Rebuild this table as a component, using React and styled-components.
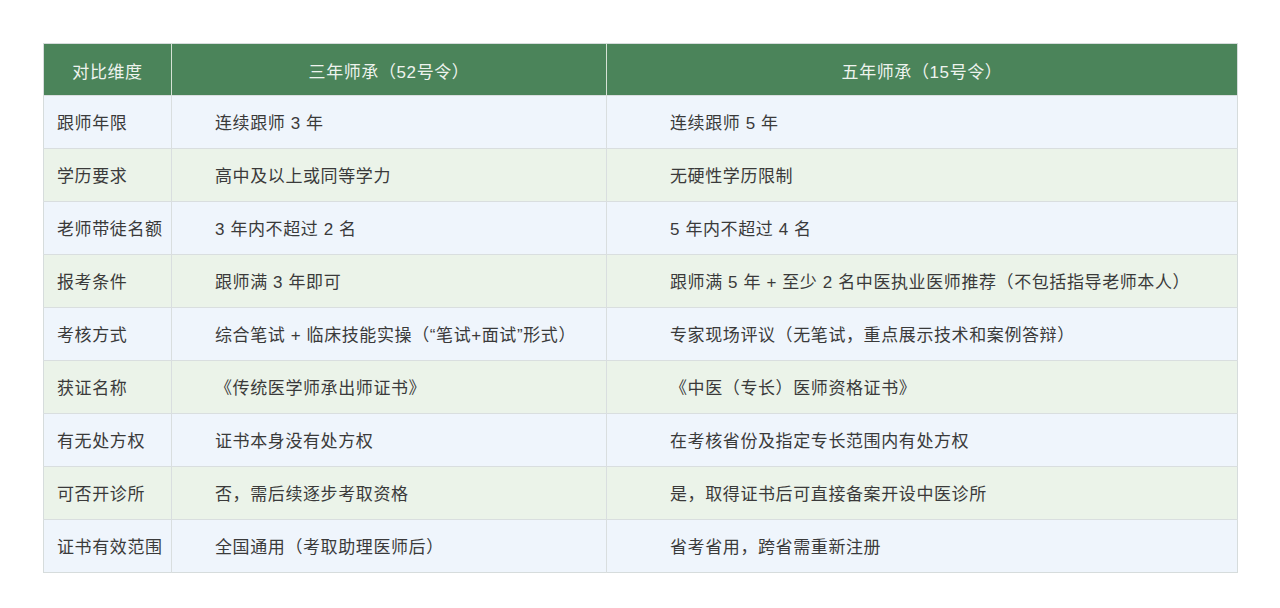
import React from "react";
import styled, { createGlobalStyle } from "styled-components";

const Global = createGlobalStyle`
  html, body {
    margin: 0;
    padding: 0;
    background: #ffffff;
  }
  body {
    font-family: "Liberation Sans", "Noto Sans CJK SC", sans-serif;
    color: #333;
  }
`;

const Page = styled.div`
  width: 1280px;
  height: 608px;
  padding: 43px 0 0 43px;
  box-sizing: border-box;
`;

const Table = styled.table`
  width: 1194px;
  border-collapse: collapse;
  table-layout: fixed;
  border: 1px solid #d6dcdc;
`;

const HeadCell = styled.th`
  background: #4b845a;
  color: #eef3ee;
  font-weight: normal;
  font-size: 17px;
  letter-spacing: 0.6px;
  height: 49px;
  padding: 2px 0 0;
  text-align: center;
  border-left: 1px solid #d6e2d6;
  &:first-child { border-left: none; }
`;

const Row = styled.tr`
  background: ${p => (p.$even ? "#ebf3e9" : "#eff5fc")};
`;

const Cell = styled.td`
  height: 48px;
  padding: 4px 0 0 ${p => p.$pad}px;
  font-size: 17px;
  line-height: 20px;
  letter-spacing: 0.6px;
  color: #3a3a3a;
  border-top: 1px solid #d9dedf;
  border-left: 1px solid #d9dedf;
  white-space: nowrap;
  &:first-child { border-left: none; }
`;

const rows = [
  ["跟师年限", "连续跟师 3 年", "连续跟师 5 年"],
  ["学历要求", "高中及以上或同等学力", "无硬性学历限制"],
  ["老师带徒名额", "3 年内不超过 2 名", "5 年内不超过 4 名"],
  ["报考条件", "跟师满 3 年即可", "跟师满 5 年 + 至少 2 名中医执业医师推荐（不包括指导老师本人）"],
  ["考核方式", "综合笔试 + 临床技能实操（“笔试+面试”形式）", "专家现场评议（无笔试，重点展示技术和案例答辩）"],
  ["获证名称", "《传统医学师承出师证书》", "《中医（专长）医师资格证书》"],
  ["有无处方权", "证书本身没有处方权", "在考核省份及指定专长范围内有处方权"],
  ["可否开诊所", "否，需后续逐步考取资格", "是，取得证书后可直接备案开设中医诊所"],
  ["证书有效范围", "全国通用（考取助理医师后）", "省考省用，跨省需重新注册"],
];

export default function App() {
  return (
    <Page>
      <Global />
      <Table>
        <colgroup>
          <col style={{ width: 128 }} />
          <col style={{ width: 435 }} />
          <col style={{ width: 631 }} />
        </colgroup>
        <thead>
          <tr>
            <HeadCell>对比维度</HeadCell>
            <HeadCell>三年师承（52号令）</HeadCell>
            <HeadCell>五年师承（15号令）</HeadCell>
          </tr>
        </thead>
        <tbody>
          {rows.map((r, i) => (
            <Row key={i} $even={i % 2 === 1}>
              <Cell $pad={13}>{r[0]}</Cell>
              <Cell $pad={43}>{r[1]}</Cell>
              <Cell $pad={63}>{r[2]}</Cell>
            </Row>
          ))}
        </tbody>
      </Table>
    </Page>
  );
}
